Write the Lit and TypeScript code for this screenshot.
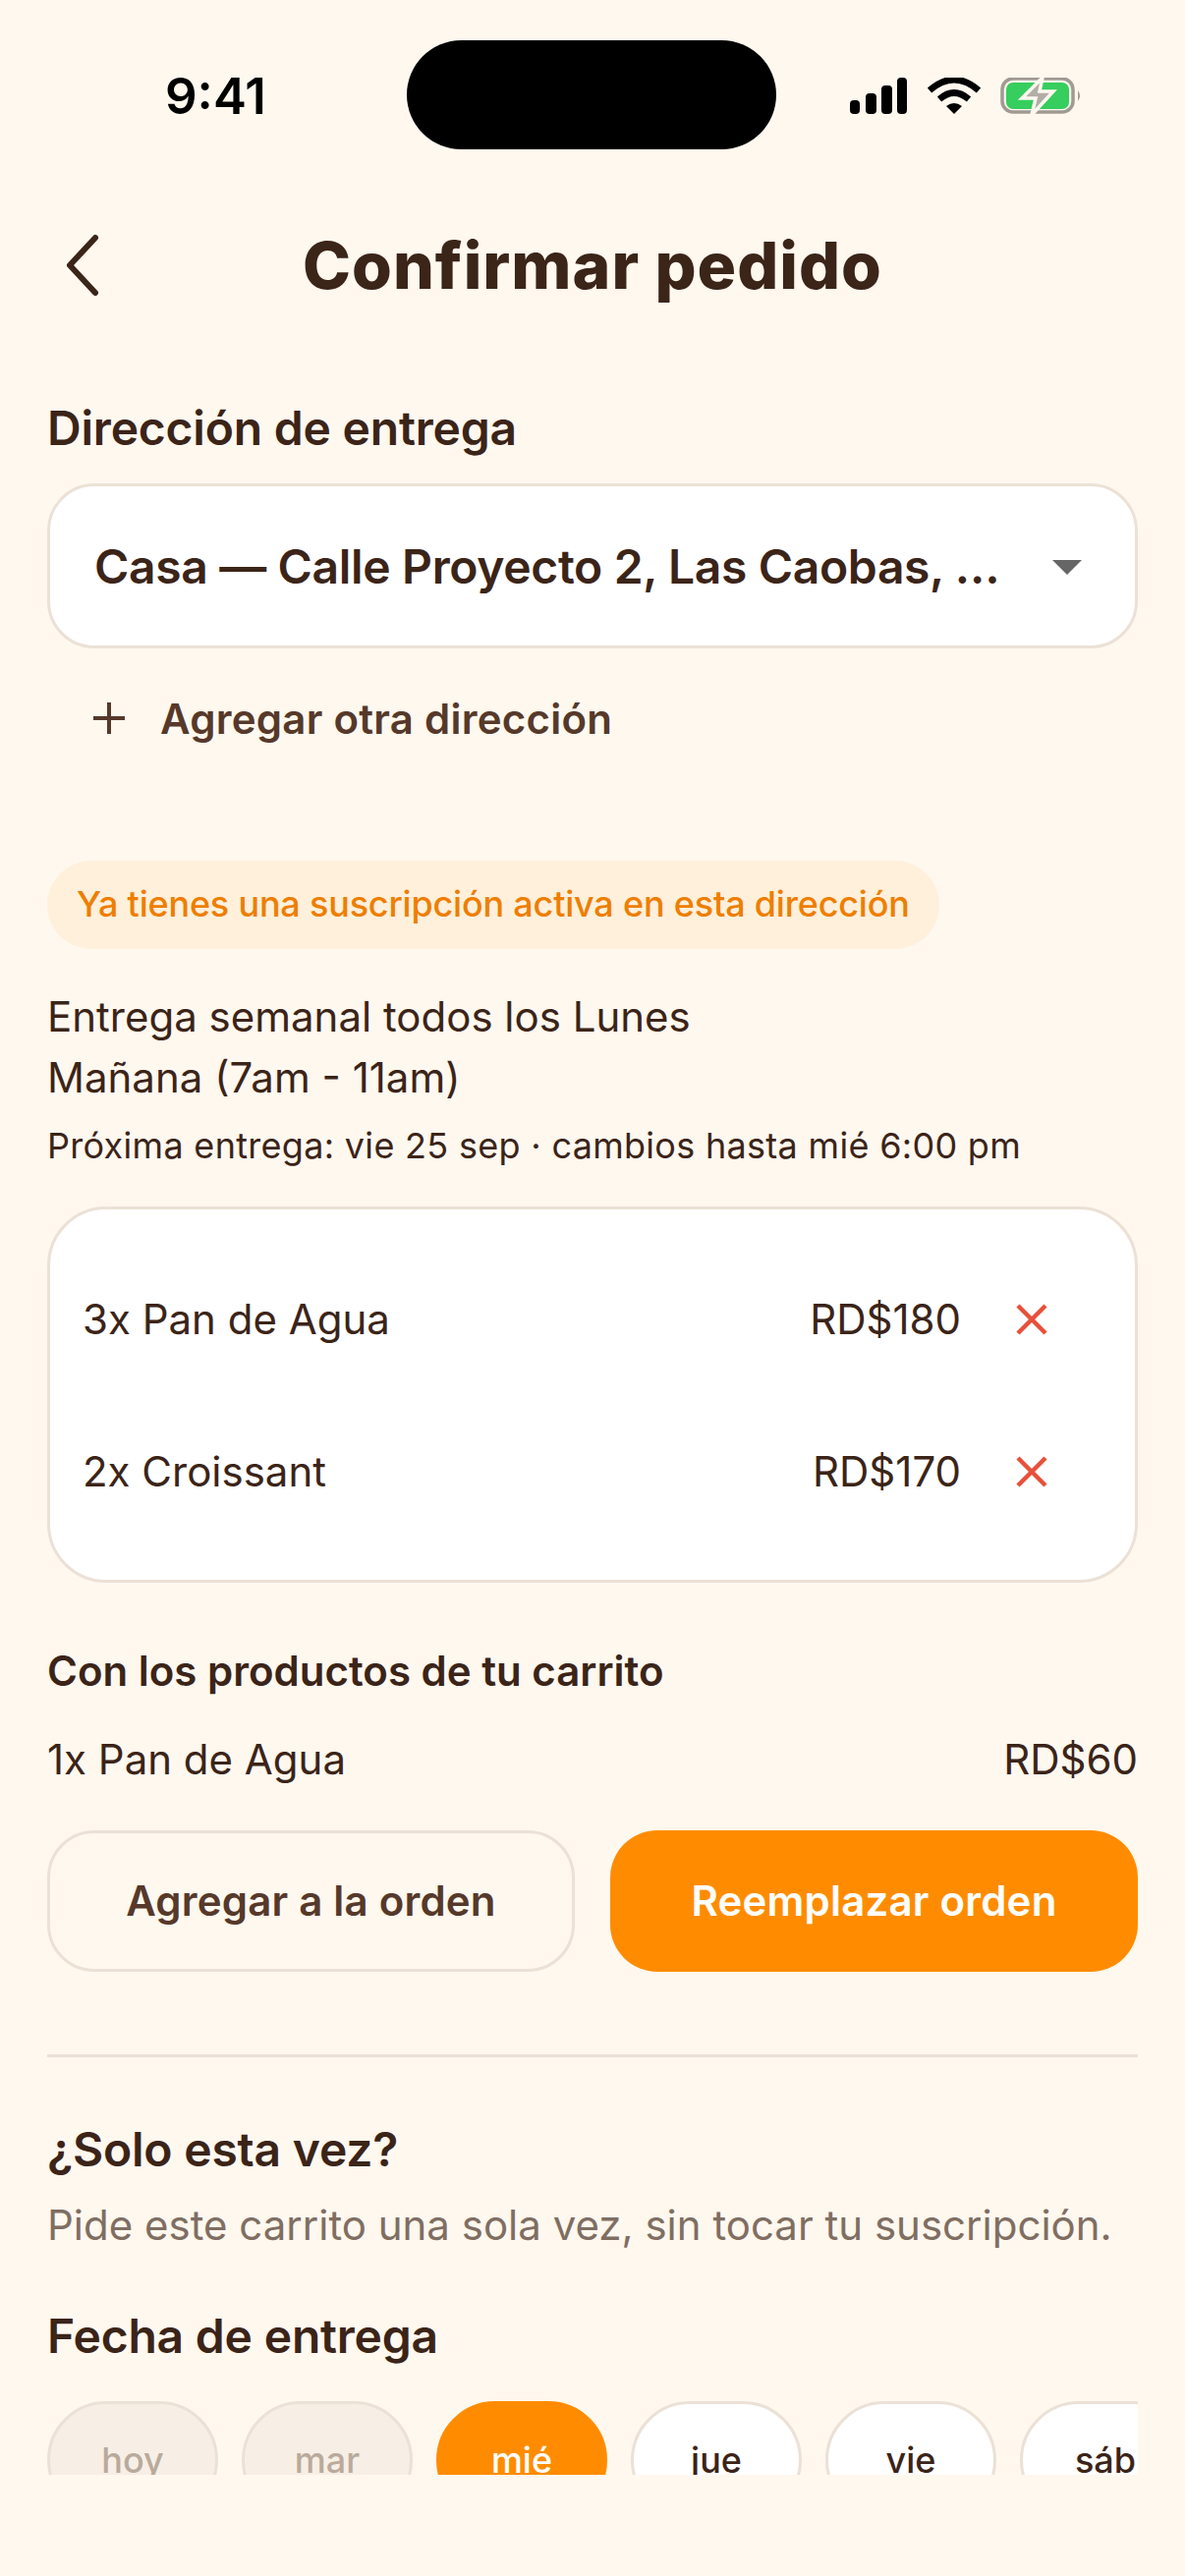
import { LitElement, html, css } from "lit";
import { customElement } from "lit/decorators.js";

const X = html`<svg class="x" viewBox="0 0 36 36"><path d="M4 4 L32 32 M32 4 L4 32" fill="none" stroke="#E8503A" stroke-width="4.5"/></svg>`;

@customElement("app-root")
export class AppRoot extends LitElement {
  static styles = css`
    :host { display: block; width: 1206px; height: 2622px; background: #FFF8EF; color: #3B2418; font-family: Inter, "Liberation Sans", sans-serif; overflow: hidden; }
    * { box-sizing: border-box; }
    .status { height: 193px; padding: 41px 0 0; display: flex; align-items: flex-start; position: relative; }
    .time { position: absolute; left: 168px; top: 70px; font-size: 51px; line-height: 56px; font-weight: 600; color: #000; }
    .island { width: 376px; height: 111px; margin-left: 414px; border-radius: 56px; background: #000; }
    .sicons { position: absolute; left: 860px; top: 79px; display: flex; align-items: center; }
    .top { height: 154px; position: relative; display: flex; align-items: center; justify-content: center; }
    .back { position: absolute; left: 64px; top: 44px; width: 40px; height: 66px; }
    h1 { margin: 0; font-size: 66px; line-height: 80px; font-weight: 800; letter-spacing: 1px; }
    .body { padding: 0 48px; }
    .lab { font-size: 48px; font-weight: 600; line-height: 60px; margin-top: 59px; letter-spacing: -0.2px; }
    .sel { margin-top: 26px; height: 168px; background: #fff; border: 3px solid #EBE1D6; border-radius: 48px; display: flex; align-items: center; padding: 0 45px; }
    .sel span { font-size: 48px; font-weight: 600; letter-spacing: -0.35px; white-space: nowrap; overflow: hidden; text-overflow: ellipsis; width: 924px; }
    .caret { margin-left: 51px; margin-top: 2px; width: 0; height: 0; border-left: 15px solid transparent; border-right: 15px solid transparent; border-top: 15px solid #666; }
    .add { display: flex; align-items: center; gap: 36px; padding-left: 47px; height: 60px; margin-top: 41px; font-size: 42px; font-weight: 600; letter-spacing: 0.25px; color: #56392A; }
    .add svg { width: 32px; height: 32px; }
    .pill { display: inline-block; margin-top: 115px; height: 90px; line-height: 88px; padding: 0 30px; background: #FFF0DC; border-radius: 45px; color: #EE7E00; font-size: 36px; font-weight: 500; letter-spacing: -0.2px; white-space: nowrap; }
    .l1 { font-size: 42px; line-height: 62px; font-weight: 400; }
    .small { font-size: 36px; line-height: 44px; margin-top: 16px; font-weight: 400; letter-spacing: 0.3px; }
    .card { margin-top: 40px; height: 383px; background: #fff; border: 3px solid #EBE1D6; border-radius: 60px; padding: 34px 87px 0 33px; }
    .row { display: flex; align-items: center; height: 155px; font-size: 42px; font-weight: 400; }
    .row .n { flex: 1; }
    .x { width: 36px; height: 36px; margin-left: 54px; flex: none; }
    .h3 { font-size: 42px; font-weight: 600; line-height: 56px; margin-top: 62px; }
    .line { display: flex; justify-content: space-between; font-size: 42px; line-height: 56px; margin-top: 34px; font-weight: 400; }
    .btns { display: grid; grid-template-columns: 1fr 1fr; gap: 36px; margin-top: 44px; }
    .btn { height: 144px; border-radius: 48px; display: flex; align-items: center; justify-content: center; font-size: 42px; font-weight: 600; letter-spacing: 0.2px; padding-bottom: 2px; }
    .b1 { border: 3px solid #EBE1D6; color: #56392A; }
    .b2 { background: #FF8C00; color: #fff; }
    hr { border: 0; height: 3px; background: #EBE1D6; margin: 84px 0 0; }
    .h2 { font-size: 48px; font-weight: 600; line-height: 60px; margin-top: 64px; letter-spacing: -0.2px; }
    .desc { font-size: 42px; line-height: 56px; color: #7F6E62; margin-top: 19px; font-weight: 400; }
    .h2b { margin-top: 55px; }
    .chips { display: flex; gap: 24px; margin-top: 36px; height: 75px; overflow: hidden; }
    .chip { flex: none; width: 174px; height: 120px; border-radius: 72px; border: 3px solid #EBE1D6; background: #fff; display: flex; justify-content: center; font-size: 36px; font-weight: 500; padding-top: 33px; line-height: 48px; }
    .off { background: #F7EFE5; color: #B9AA9C; }
    .on { background: #FF8C00; border-color: #FF8C00; color: #fff; }
  `;

  render() {
    return html`
      <div class="status">
        <div class="time">9:41</div>
        <div class="island"></div>
        <div class="sicons">
          <svg width="250" height="44" viewBox="0 0 250 44">
            <rect x="5" y="23" width="10" height="14" rx="4" fill="#000"/>
            <rect x="21" y="16" width="11" height="21" rx="4" fill="#000"/>
            <rect x="37" y="8" width="11" height="29" rx="4" fill="#000"/>
            <rect x="53" y="0" width="10" height="37" rx="4" fill="#000"/>
            <path d="M86 13 Q111 -9 136 13 M96 22 Q111 9 126 22" fill="none" stroke="#000" stroke-width="6.5"/>
            <path d="M103 29 Q111 23 119 29 L111 37 Z" fill="#000"/>
            <rect x="160" y="1" width="72" height="34" rx="11" fill="none" stroke="#A09A92" stroke-width="3.5"/>
            <rect x="164" y="5" width="64" height="27" rx="7" fill="#36CE5E"/>
            <path d="M237 13 Q241 18.5 237 24 Z" fill="#A09A92"/>
            <path d="M201 0 L180 21 L194 21 L190 38 L212 14 L198 14 Z" fill="#B2ADA6" stroke="#FFF8EF" stroke-width="3.5"/>
          </svg>
        </div>
      </div>
      <div class="top">
        <svg class="back" viewBox="0 0 40 66"><path d="M33 5 L7 33 L33 61" fill="none" stroke="#3B2418" stroke-width="6" stroke-linecap="round" stroke-linejoin="round"/></svg>
        <h1>Confirmar pedido</h1>
      </div>
      <div class="body">
        <div class="lab">Dirección de entrega</div>
        <div class="sel"><span>Casa — Calle Proyecto 2, Las Caobas, Santo Domingo</span><i class="caret"></i></div>
        <div class="add">
          <svg viewBox="0 0 32 32"><path d="M16 0 V32 M0 16 H32" stroke="#56392A" stroke-width="4" fill="none"/></svg>
          <span>Agregar otra dirección</span>
        </div>
        <div class="pill">Ya tienes una suscripción activa en esta dirección</div>
        <div class="l1" style="margin-top:38px">Entrega semanal todos los Lunes</div>
        <div class="l1">Mañana (7am - 11am)</div>
        <div class="small">Próxima entrega: vie 25 sep · cambios hasta mié 6:00 pm</div>
        <div class="card">
          <div class="row"><span class="n">3x Pan de Agua</span><span>RD$180</span>${X}</div>
          <div class="row"><span class="n">2x Croissant</span><span>RD$170</span>${X}</div>
        </div>
        <div class="h3">Con los productos de tu carrito</div>
        <div class="line"><span>1x Pan de Agua</span><span>RD$60</span></div>
        <div class="btns"><div class="btn b1">Agregar a la orden</div><div class="btn b2">Reemplazar orden</div></div>
        <hr />
        <div class="h2">¿Solo esta vez?</div>
        <div class="desc">Pide este carrito una sola vez, sin tocar tu suscripción.</div>
        <div class="h2 h2b">Fecha de entrega</div>
        <div class="chips">
          <div class="chip off">hoy</div><div class="chip off">mar</div><div class="chip on">mié</div><div class="chip">jue</div><div class="chip">vie</div><div class="chip">sáb</div><div class="chip">dom</div>
        </div>
      </div>
    `;
  }
}
